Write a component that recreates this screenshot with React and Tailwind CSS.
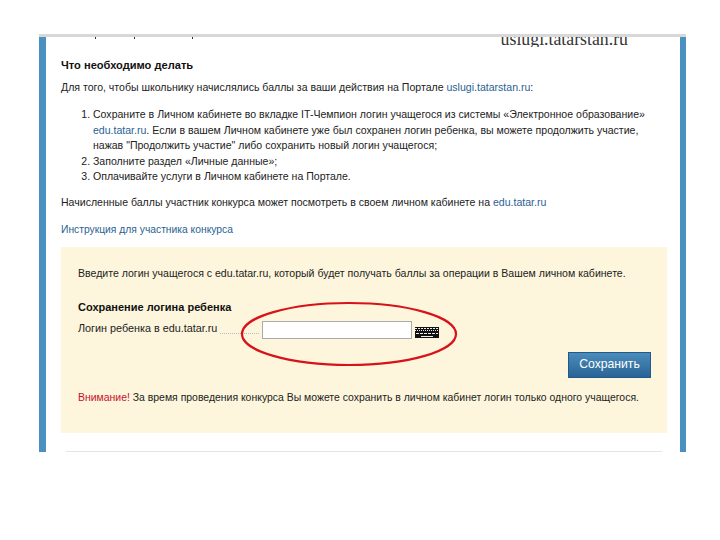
const linkCls = "text-[#2a5f94]";

function KeyboardIcon() {
  return (
    <svg width="24" height="11" viewBox="0 0 24 11" className="block">
      <rect x="0" y="0" width="24" height="11" fill="#111" />
      <path d="M0 1.5H24" stroke="#eee" strokeWidth="1" strokeDasharray="2 1" />
      <path d="M0 3.5H24" stroke="#eee" strokeWidth="1" strokeDasharray="1 1" />
      <path d="M1 6.5H23" stroke="#eee" strokeWidth="1" strokeDasharray="3 1" />
      <path d="M6 9.5H18" stroke="#eee" strokeWidth="1" />
    </svg>
  );
}

export default function App() {
  return (
    <div className="w-[720px] h-[540px] bg-white overflow-hidden pt-[34px] pl-[39px] font-['Liberation_Sans',sans-serif] text-[10.55px] leading-[15.4px] text-[#222]">
      <div className="w-[647px] h-[3px] bg-[#d8d8d8]" />
      <div className="w-[647px] h-[415px] bg-white border-l-[7px] border-r-[6px] border-[#4a90c0] pl-[15px] pr-[13px]">
        <div className="h-[10px] overflow-hidden flex items-start font-['Liberation_Serif',serif] text-[17.8px] leading-[10px] text-[#333]">
          <span className="ml-[34px] w-px h-[2px] bg-[#333]" />
          <span className="ml-[38px] w-px h-[2px] bg-[#333]" />
          <span className="ml-[57px] w-px h-[2px] bg-[#333]" />
          <span className="ml-auto mr-[39px] -mt-[3px]">uslugi.tatarstan.ru</span>
        </div>

        <h2 className="mt-[11px] font-bold text-[11.1px] text-[#111]">Что необходимо делать</h2>
        <p className="mt-[7px]">
          Для того, чтобы школьнику начислялись баллы за ваши действия на Портале{" "}
          <span className={linkCls}>uslugi.tatarstan.ru</span>:
        </p>
        <ol className="mt-[11.5px] ml-[32px] list-decimal">
          <li>
            Сохраните в Личном кабинете во вкладке IT-Чемпион логин учащегося из системы «Электронное образование»{" "}
            <span className={linkCls}>edu.tatar.ru</span>. Если в вашем Личном кабинете уже был сохранен логин ребенка, вы можете продолжить участие, нажав "Продолжить участие" либо сохранить новый логин учащегося;
          </li>
          <li>Заполните раздел «Личные данные»;</li>
          <li>Оплачивайте услуги в Личном кабинете на Портале.</li>
        </ol>
        <p className="mt-[11px]">
          Начисленные баллы участник конкурса может посмотреть в своем личном кабинете на{" "}
          <span className={linkCls}>edu.tatar.ru</span>
        </p>
        <p className={`mt-[11px] text-[10.3px] ${linkCls}`}>Инструкция для участника конкурса</p>

        <div className="mt-[10px] w-[606px] h-[186px] bg-[#fdf6dc] px-[17px] pt-[19px]">
          <p>Введите логин учащегося с edu.tatar.ru, который будет получать баллы за операции в Вашем личном кабинете.</p>
          <h3 className="mt-[18px] font-bold text-[11px] text-[#111]">Сохранение логина ребенка</h3>
          <div className="relative mt-[6px] flex items-start">
            <span className="w-[142px] shrink-0 text-[10.8px]">Логин ребенка в edu.tatar.ru</span>
            <span className="w-[39px] mt-[12px] border-b border-dotted border-[#bbb]" />
            <input className="ml-[3px] w-[150px] h-[18px] bg-white border border-[#aaa]" />
            <span className="ml-[3px] mt-[6px]"><KeyboardIcon /></span>
            <svg width="218" height="66" viewBox="0 0 218 66" className="absolute left-[162px] -top-[20px]">
              <ellipse cx="109" cy="33" rx="107" ry="31" fill="none" stroke="#d8121a" strokeWidth="2.2" />
            </svg>
          </div>
          <div className="flex justify-end mt-[13px] -mr-px">
            <button className="w-[83px] h-[26px] text-white text-[12.2px] bg-gradient-to-b from-[#4a8cbb] to-[#2a6496] border border-[#1f5a8a]">Сохранить</button>
          </div>
          <p className="mt-[12px] text-[10.45px]">
            <span className="text-[#c8102e]">Внимание!</span> За время проведения конкурса Вы можете сохранить в личном кабинет логин только одного учащегося.
          </p>
        </div>
        <div className="mt-[18px] ml-[5px] w-[596px] h-px bg-[#e4e4e4]" />
      </div>
    </div>
  );
}
